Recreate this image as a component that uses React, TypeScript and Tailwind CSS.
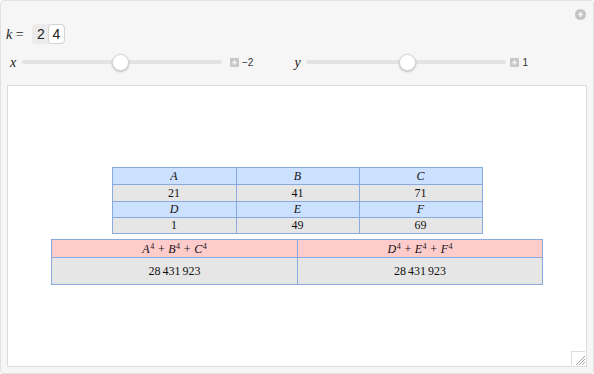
import React from "react";

const serif = { fontFamily: '"Liberation Serif", "Times New Roman", serif' };

function Slider({ thumb }: { thumb: number }) {
  return (
    <div className="relative w-[200px] h-[16px] flex items-center">
      <div className="w-full h-[4px] rounded-full bg-[#e3e3e3]" />
      <div
        className="absolute top-0 w-[17px] h-[17px] rounded-full bg-white border border-[#d6d6d6] shadow-[0_1px_2px_rgba(0,0,0,0.25)]"
        style={{ left: thumb - 8 }}
      />
    </div>
  );
}

function PlusBox() {
  return (
    <div className="w-[9px] h-[9px] bg-[#c8c8c8] rounded-[1px] flex items-center justify-center">
      <svg width="7" height="7" viewBox="0 0 7 7">
        <path d="M3.5 1.2v4.6M1.2 3.5h4.6" stroke="#f4f4f4" strokeWidth="1.4" />
      </svg>
    </div>
  );
}

function Sup({ children }: { children: React.ReactNode }) {
  return <span className="text-[8px] not-italic relative top-[-4px] ml-[0.5px]">{children}</span>;
}

export default function App() {
  const blueB = "border-[#8aa9de]";
  return (
    <div className="w-[594px] h-[374px] bg-[#f6f6f6] border border-[#e2e2e2] rounded-[4px] relative" style={{ fontFamily: '"Liberation Sans", Arial, sans-serif' }}>
      <div className="absolute right-[7px] top-[8px] w-[11px] h-[11px] rounded-full bg-[#c4c4c4] flex items-center justify-center">
        <svg width="7" height="7" viewBox="0 0 7 7">
          <path d="M3.5 1v5M1 3.5h5" stroke="#f6f6f6" strokeWidth="1.6" />
        </svg>
      </div>
      <div className="pl-[5px] pt-[23px] flex items-center h-[43px]">
        <span className="text-[14px] text-[#222] w-[26px]" style={serif}>
          <i>k</i> =
        </span>
        <div className="flex h-[20px] rounded-[4px] bg-[#ebebeb] text-[14px] text-[#222]">
          <div className="w-[16px] flex items-center justify-center pl-[2px]">2</div>
          <div className="w-[17px] flex items-center justify-center bg-white border border-[#d4d4d4] rounded-[4px]">4</div>
        </div>
      </div>
      <div className="flex items-center h-[20px] mt-[8px]">
        <span className="pl-[9px] w-[20px] text-[14px] text-[#222] italic" style={serif}>x</span>
        <div className="ml-[1px]"><Slider thumb={98} /></div>
        <div className="ml-[8px]"><PlusBox /></div>
        <span className="ml-[3px] text-[10px] text-[#333]">−2</span>
        <span className="ml-[41px] w-[12px] text-[14px] text-[#222] italic" style={serif}>y</span>
        <div><Slider thumb={101} /></div>
        <div className="ml-[4px]"><PlusBox /></div>
        <span className="ml-[3px] text-[10px] text-[#333]">1</span>
      </div>
      <div className="absolute left-[6px] top-[84px] w-[580px] h-[282px] bg-white border border-[#dcdcdc] flex flex-col items-center justify-center text-[12px] text-[#111]" style={serif}>
        <div className={`w-[371px] border ${blueB} grid grid-cols-[123px_123px_123px]`}>
          {[
            ["A", "B", "C"],
            ["21", "41", "71"],
            ["D", "E", "F"],
            ["1", "49", "69"],
          ].map((row, ri) =>
            row.map((c, ci) => (
              <div
                key={`${ri}-${ci}`}
                className={`h-[16.25px] flex items-center justify-center ${ri % 2 === 0 ? "bg-[#cce0ff] italic" : "bg-[#e6e6e6]"} ${ci > 0 ? `border-l ${blueB}` : ""} ${ri > 0 ? `border-t ${blueB}` : ""}`}
              >
                {c}
              </div>
            ))
          )}
        </div>
        <div className={`mt-[5px] w-[492px] border ${blueB} grid grid-cols-2`}>
          <div className="h-[17px] bg-[#ffcccc] flex items-center justify-center italic">
            <span>A<Sup>4</Sup> + B<Sup>4</Sup> + C<Sup>4</Sup></span>
          </div>
          <div className={`h-[17px] bg-[#ffcccc] flex items-center justify-center italic border-l ${blueB}`}>
            <span>D<Sup>4</Sup> + E<Sup>4</Sup> + F<Sup>4</Sup></span>
          </div>
          <div className={`h-[27px] bg-[#e6e6e6] flex items-center justify-center border-t ${blueB}`}>28<span className="ml-[2px]">431</span><span className="ml-[2px]">923</span></div>
          <div className={`h-[27px] bg-[#e6e6e6] flex items-center justify-center border-t border-l ${blueB}`}>28<span className="ml-[2px]">431</span><span className="ml-[2px]">923</span></div>
        </div>
        <div className="absolute right-[1px] bottom-[1px] w-[14px] h-[14px] border-l border-t border-[#dcdcdc] overflow-hidden">
          <svg width="14" height="14" viewBox="0 0 14 14">
            <path d="M4 13L13 4M7 13L13 7M10 13L13 10" stroke="#9a9a9a" strokeWidth="0.9" />
          </svg>
        </div>
      </div>
    </div>
  );
}
